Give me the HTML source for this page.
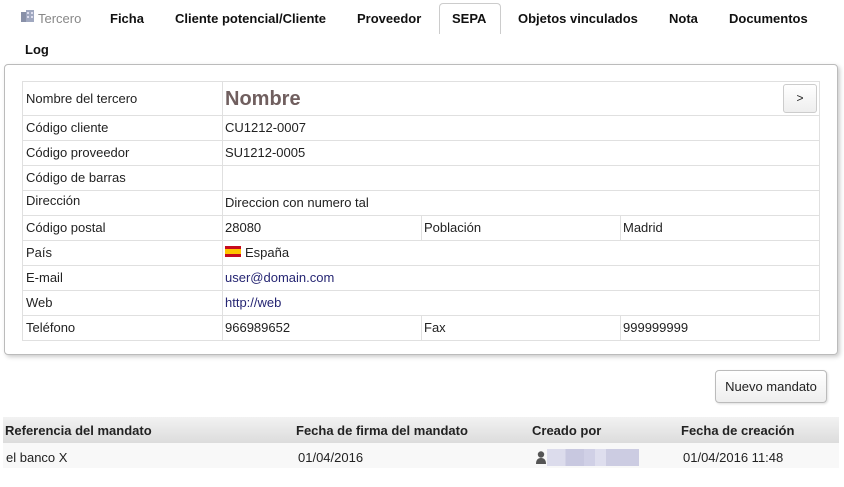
<!DOCTYPE html>
<html><head><meta charset="utf-8">
<style>
*{margin:0;padding:0;box-sizing:border-box}
body{width:844px;height:487px;background:#fff;font-family:"Liberation Sans",sans-serif;font-size:13px;color:#222;position:relative;overflow:hidden}
.a{position:absolute;white-space:nowrap}
.tab{position:absolute;top:11px;font-weight:bold;font-size:13px;color:#111}
.box{position:absolute;left:4px;top:64px;width:834px;height:291px;border:1px solid #bbb;border-radius:4px;box-shadow:2px 2px 4px #ccc}
.hl{position:absolute;left:22px;width:798px;height:1px;background:#e0e0e0}
.vl{position:absolute;width:1px;background:#e0e0e0}
.c{position:absolute;white-space:nowrap;font-size:13px}
a{color:#262673;text-decoration:none}
</style></head><body>
<svg class="a" style="left:21px;top:10px" width="13" height="12" viewBox="0 0 13 12"><rect x="0" y="2" width="5" height="10" fill="#8890a8"/><rect x="5" y="0" width="8" height="12" fill="#a0a8c0"/><g fill="#dde"><rect x="6" y="2" width="2" height="2"/><rect x="10" y="2" width="2" height="2"/><rect x="6" y="6" width="2" height="2"/><rect x="10" y="6" width="2" height="2"/></g></svg>
<div class="a" style="left:38px;top:11px;color:#888;font-size:13px">Tercero</div>
<div class="tab" style="left:110px">Ficha</div>
<div class="tab" style="left:175px">Cliente potencial/Cliente</div>
<div class="tab" style="left:357px">Proveedor</div>
<div class="a" style="left:439px;top:3px;width:62px;height:31px;border:1px solid #ccc;border-bottom:none;border-radius:4px 4px 0 0;background:#fff"></div>
<div class="tab" style="left:452px">SEPA</div>
<div class="tab" style="left:518px">Objetos vinculados</div>
<div class="tab" style="left:669px">Nota</div>
<div class="tab" style="left:729px">Documentos</div>
<div class="tab" style="left:25px;top:42px">Log</div>

<div class="box"></div>
<div class="hl" style="top:81px"></div>
<div class="hl" style="top:115px"></div>
<div class="hl" style="top:140px"></div>
<div class="hl" style="top:165px"></div>
<div class="hl" style="top:190px"></div>
<div class="hl" style="top:215px"></div>
<div class="hl" style="top:240px"></div>
<div class="hl" style="top:265px"></div>
<div class="hl" style="top:290px"></div>
<div class="hl" style="top:315px"></div>
<div class="hl" style="top:340px"></div>
<div class="vl" style="left:22px;top:81px;height:260px"></div>
<div class="vl" style="left:222px;top:81px;height:260px"></div>
<div class="vl" style="left:819px;top:81px;height:260px"></div>
<div class="vl" style="left:421px;top:215px;height:25px"></div>
<div class="vl" style="left:620px;top:215px;height:25px"></div>
<div class="vl" style="left:421px;top:315px;height:25px"></div>
<div class="vl" style="left:620px;top:315px;height:25px"></div>

<div class="c" style="left:26px;top:91px">Nombre del tercero</div>
<div class="c" style="left:225px;top:88px;font-size:20px;font-weight:bold;color:#705f5f">Nombre</div>
<div class="a" style="left:783px;top:84px;width:34px;height:29px;border:1px solid #ccc;border-radius:3px;background:linear-gradient(#fff,#eee);text-align:center;line-height:27px;font-size:12px">&gt;</div>
<div class="c" style="left:26px;top:120px">Código cliente</div>
<div class="c" style="left:225px;top:120px">CU1212-0007</div>
<div class="c" style="left:26px;top:145px">Código proveedor</div>
<div class="c" style="left:225px;top:145px">SU1212-0005</div>
<div class="c" style="left:26px;top:170px">Código de barras</div>
<div class="c" style="left:26px;top:193px">Dirección</div>
<div class="c" style="left:225px;top:195px">Direccion con numero tal</div>
<div class="c" style="left:26px;top:220px">Código postal</div>
<div class="c" style="left:225px;top:220px">28080</div>
<div class="c" style="left:424px;top:220px">Población</div>
<div class="c" style="left:623px;top:220px">Madrid</div>
<div class="c" style="left:26px;top:245px">País</div>
<div class="a" style="left:225px;top:246px;width:16px;height:11px;background:linear-gradient(#c60b1e 0 27%,#ffc400 27% 73%,#c60b1e 73%)"></div>
<div class="c" style="left:245px;top:245px">España</div>
<div class="c" style="left:26px;top:270px">E-mail</div>
<div class="c" style="left:225px;top:270px"><a>user@domain.com</a></div>
<div class="c" style="left:26px;top:295px">Web</div>
<div class="c" style="left:225px;top:295px"><a>http://web</a></div>
<div class="c" style="left:26px;top:320px">Teléfono</div>
<div class="c" style="left:225px;top:320px">966989652</div>
<div class="c" style="left:424px;top:320px">Fax</div>
<div class="c" style="left:623px;top:320px">999999999</div>

<div class="a" style="left:715px;top:370px;width:112px;height:33px;border:1px solid #bbb;border-radius:4px;background:linear-gradient(#fff,#eee);box-shadow:1px 1px 2px #ddd;text-align:center;line-height:31px;font-size:13px">Nuevo mandato</div>

<div class="a" style="left:3px;top:417px;width:836px;height:26px;background:linear-gradient(#f2f2f2,#dcdcdc)"></div>
<div class="a" style="left:3px;top:443px;width:836px;height:25px;background:#f8f8f8"></div>
<div class="c" style="left:5px;top:423px;font-weight:bold">Referencia del mandato</div>
<div class="c" style="left:296px;top:423px;font-weight:bold">Fecha de firma del mandato</div>
<div class="c" style="left:532px;top:423px;font-weight:bold">Creado por</div>
<div class="c" style="left:681px;top:423px;font-weight:bold">Fecha de creación</div>
<div class="c" style="left:6px;top:450px">el banco X</div>
<div class="c" style="left:298px;top:450px">01/04/2016</div>
<svg class="a" style="left:535px;top:451px" width="12" height="13" viewBox="0 0 12 13"><circle cx="6" cy="3.5" r="3.2" fill="#555"/><path d="M1 13 Q1 7 6 7 Q11 7 11 13Z" fill="#555"/></svg>
<div class="a" style="left:547px;top:449px;width:92px;height:17px;background:linear-gradient(90deg,#dcdcec 0 20%,#c8c8e0 20% 40%,#d0d0e6 40% 52%,#dedeee 52% 64%,#ccccE2 64%)"></div>
<div class="c" style="left:683px;top:450px">01/04/2016 11:48</div>
</body></html>
